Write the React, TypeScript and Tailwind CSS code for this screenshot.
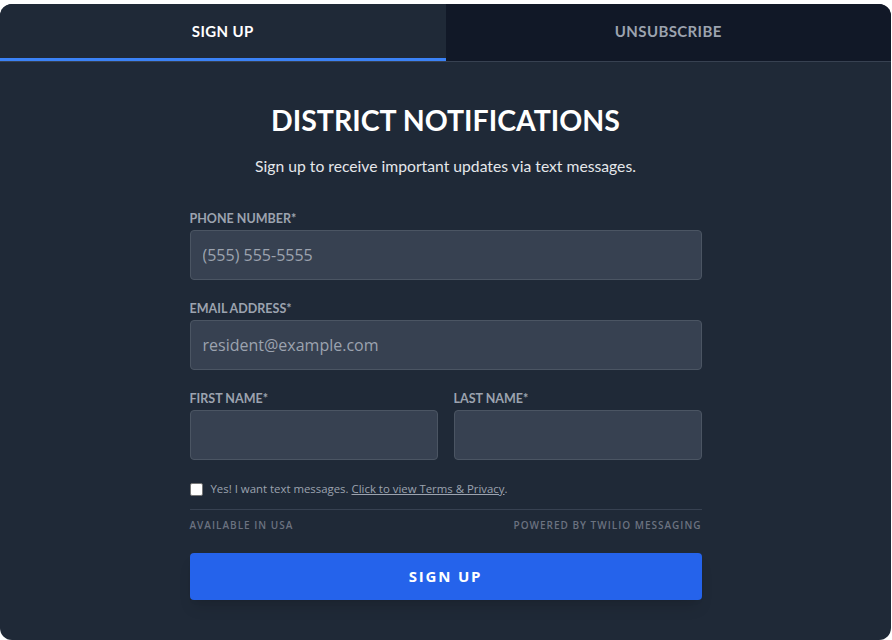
import React from "react";

export default function App() {
  return (
    <div className="min-h-screen bg-white pt-1" style={{ fontFamily: "Lato, 'Open Sans', sans-serif" }}>
      <div className="w-[891px] rounded-xl overflow-hidden bg-[#1f2937] font-['Lato',sans-serif]">
        <div className="flex border-b border-[#374151]">
          <div className="flex-1 h-[57px] flex items-center justify-center border-b-[3px] border-[#3b82f6] bg-[#1f2937] text-white text-[15px] font-bold tracking-wide">
            SIGN UP
          </div>
          <div className="flex-1 h-[57px] flex items-center justify-center border-b-[3px] border-transparent bg-[#111827] text-[#9ca3af] text-[15px] font-bold tracking-wide">
            UNSUBSCRIBE
          </div>
        </div>
        <div className="pt-10 pb-10 flex flex-col items-center">
          <h1 className="text-[28.5px] leading-9 font-bold text-white">DISTRICT NOTIFICATIONS</h1>
          <p className="mt-4 text-[15.7px] leading-6 text-[#e5e7eb]">
            Sign up to receive important updates via text messages.
          </p>
          <div className="mt-8 w-[512px] flex flex-col">
            <label className="pt-px text-[12.5px] leading-4 font-bold text-[#9ca3af] mb-[3px]">PHONE NUMBER*</label>
            <input
              className="h-[50px] w-full rounded border border-[#4b5563] bg-[#374151] px-3 text-base text-white placeholder:text-[#9ca3af] font-['Open_Sans',sans-serif] outline-none"
              placeholder="(555) 555-5555"
            />
            <label className="mt-5 pt-px text-[12.5px] leading-4 font-bold text-[#9ca3af] mb-[3px]">EMAIL ADDRESS*</label>
            <input
              className="h-[50px] w-full rounded border border-[#4b5563] bg-[#374151] px-3 text-base text-white placeholder:text-[#9ca3af] font-['Open_Sans',sans-serif] outline-none"
              placeholder="resident@example.com"
            />
            <div className="mt-5 grid grid-cols-2 gap-4">
              <div className="flex flex-col">
                <label className="pt-px text-[12.5px] leading-4 font-bold text-[#9ca3af] mb-[3px]">FIRST NAME*</label>
                <input className="h-[50px] w-full rounded border border-[#4b5563] bg-[#374151] px-3 text-base text-white outline-none" />
              </div>
              <div className="flex flex-col">
                <label className="pt-px text-[12.5px] leading-4 font-bold text-[#9ca3af] mb-[3px]">LAST NAME*</label>
                <input className="h-[50px] w-full rounded border border-[#4b5563] bg-[#374151] px-3 text-base text-white outline-none" />
              </div>
            </div>
            <div className="mt-[21px] flex items-center gap-2 font-['Open_Sans',sans-serif] text-[11.4px] leading-4 text-[#9ca3af]">
              <span className="w-[13px] h-[13px] bg-white border border-[#767676] rounded-[2px] shrink-0" />
              <span>
                Yes! I want text messages.{" "}
                <span className="underline">Click to view Terms &amp; Privacy</span>.
              </span>
            </div>
            <div className="mt-3 border-t border-[#374151] pt-2 flex justify-between font-['Open_Sans',sans-serif] text-[10px] leading-[15px] font-semibold tracking-[0.1em] text-[#6b7280]">
              <span>AVAILABLE IN USA</span>
              <span>POWERED BY TWILIO MESSAGING</span>
            </div>
            <button className="mt-5 h-[47px] w-full rounded bg-[#2563eb] text-white text-[15px] font-bold tracking-[0.12em] shadow-lg font-['Open_Sans',sans-serif]">
              SIGN UP
            </button>
          </div>
        </div>
      </div>
    </div>
  );
}
